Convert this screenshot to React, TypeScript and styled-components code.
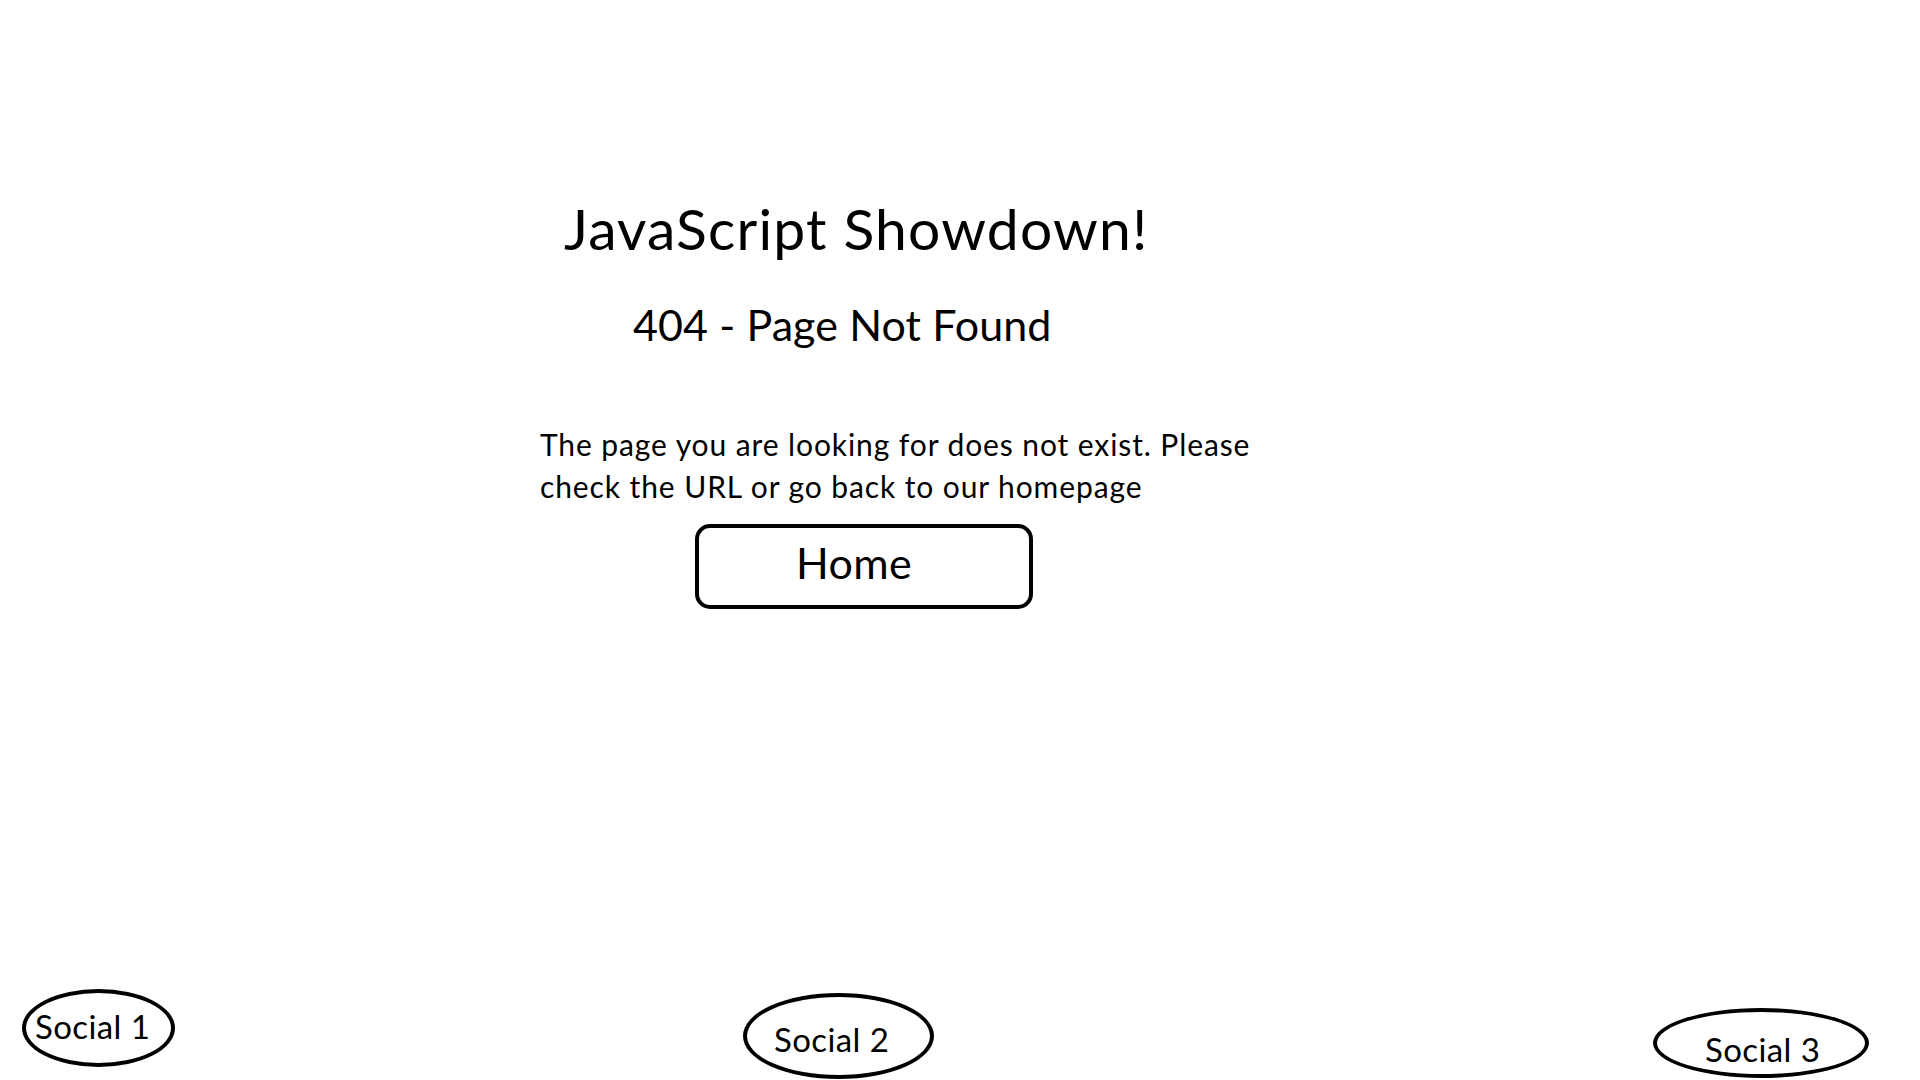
import React from "react";
import styled, { createGlobalStyle } from "styled-components";

const GlobalStyle = createGlobalStyle`
  html, body {
    margin: 0;
    padding: 0;
    background: #ffffff;
  }
  body {
    font-family: Lato, "Open Sans", "Liberation Sans", sans-serif;
    color: #000000;
  }
  #root {
    height: 100vh;
  }
`;

const Page = styled.div`
  height: 100vh;
  display: flex;
  flex-direction: column;
  overflow: hidden;
`;

const Main = styled.main`
  flex: 1;
  display: flex;
  flex-direction: column;
  align-items: flex-start;
  padding: 193px 0 0 540px;
`;

const Title = styled.h1`
  margin: 0 0 0 24px;
  font-size: 57px;
  line-height: 70px;
  letter-spacing: 1.2px;
  font-weight: 400;
`;

const Subtitle = styled.h2`
  margin: 36px 0 0 93px;
  font-size: 43px;
  line-height: 52px;
  letter-spacing: 0.1px;
  font-weight: 400;
`;

const Message = styled.p`
  margin: 73px 0 0 0;
  width: 745px;
  font-size: 30px;
  line-height: 41.5px;
  letter-spacing: 0.9px;
`;

const HomeButton = styled.button`
  margin: 17px 0 0 155px;
  box-sizing: border-box;
  width: 338px;
  height: 85px;
  border: 4px solid #000;
  border-radius: 15px;
  background: #fff;
  padding: 10px 0 0 97px;
  display: flex;
  align-items: flex-start;
  font-family: inherit;
  font-size: 43px;
  line-height: 50px;
  letter-spacing: 0.4px;
  color: #000;
  cursor: pointer;
`;

const Footer = styled.footer`
  display: flex;
  align-items: flex-end;
  padding-left: 22px;
`;

const Social = styled.a<{
  $w: number;
  $h: number;
  $ml: number;
  $mb: number;
  $pt: number;
  $pl: number;
}>`
  box-sizing: border-box;
  width: ${(p) => p.$w}px;
  height: ${(p) => p.$h}px;
  margin-left: ${(p) => p.$ml}px;
  margin-bottom: ${(p) => p.$mb}px;
  padding: ${(p) => p.$pt}px 0 0 ${(p) => p.$pl}px;
  border: 4px solid #000;
  border-radius: 50%;
  display: flex;
  align-items: flex-start;
  font-size: 33px;
  line-height: 38px;
  letter-spacing: 0.4px;
  color: #000;
  text-decoration: none;
  white-space: nowrap;
`;

export default function App() {
  return (
    <>
      <GlobalStyle />
      <Page>
        <Main>
          <Title>JavaScript Showdown!</Title>
          <Subtitle>404 - Page Not Found</Subtitle>
          <Message>
            The page you are looking for does not exist. Please check the URL or
            go back to our homepage
          </Message>
          <HomeButton type="button">Home</HomeButton>
        </Main>
        <Footer>
          <Social href="#" $w={153} $h={78} $ml={0} $mb={13} $pt={14} $pl={9}>
            Social 1
          </Social>
          <Social href="#" $w={191} $h={86} $ml={568} $mb={1} $pt={23} $pl={27}>
            Social 2
          </Social>
          <Social href="#" $w={216} $h={70} $ml={719} $mb={2} $pt={18} $pl={48}>
            Social 3
          </Social>
        </Footer>
      </Page>
    </>
  );
}
